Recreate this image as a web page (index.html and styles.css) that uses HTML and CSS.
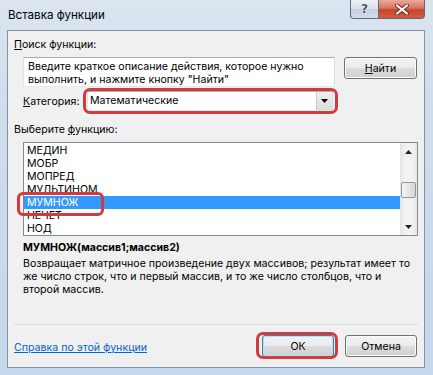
FILE: index.html
```html
<!DOCTYPE html>
<html>
<head>
    <title>Вставка функции</title>
    <link rel="stylesheet" href="styles.css">
</head>
<body>
    <div class="window">
        <div class="titlebar">
            <div class="title">Вставка функции</div>
            <div class="caption-btns">
                <div class="cap cap-help"><span class="help-glyph">?</span></div>
                <div class="cap cap-close">
                    <svg width="14" height="11" viewBox="0 0 14 11">
                        <path d="M2 1.5 L12 9.5 M12 1.5 L2 9.5" stroke="#6b2a20" stroke-width="4" stroke-linecap="round"/>
                        <path d="M2 1.5 L12 9.5 M12 1.5 L2 9.5" stroke="#ffffff" stroke-width="2.2" stroke-linecap="round"/>
                    </svg>
                </div>
            </div>
        </div>

        <div class="client">
            <div class="label"><u>П</u>оиск функции:</div>
            <div class="search-row">
                <div class="search-input">Введите краткое описание действия, которое нужно<br>выполнить, и нажмите кнопку "Найти"</div>
                <button class="btn btn-find"><u>Н</u>айти</button>
            </div>

            <div class="category-row">
                <div class="category-label"><u>К</u>атегория:</div>
                <div class="select mark mark-select">
                    <div class="select-value">Математические</div>
                    <div class="select-arrow">
                        <svg width="7" height="4" viewBox="0 0 7 4"><path d="M0 0 H7 L3.5 4 Z" fill="#000"/></svg>
                    </div>
                </div>
            </div>

            <div class="label label-list">Выберите <u>ф</u>ункцию:</div>
            <div class="listbox">
                <ul class="items">
                    <li>МЕДИН</li>
                    <li>МОБР</li>
                    <li>МОПРЕД</li>
                    <li>МУЛЬТИНОМ</li>
                    <li class="sel">МУМНОЖ</li>
                    <li>НЕЧЕТ</li>
                    <li>НОД</li>
                </ul>
                <div class="scrollbar">
                    <div class="sb-arrow">
                        <svg width="7" height="4" viewBox="0 0 7 4"><path d="M0 4 H7 L3.5 0 Z" fill="#222"/></svg>
                    </div>
                    <div class="sb-track"><div class="sb-thumb"></div></div>
                    <div class="sb-arrow">
                        <svg width="7" height="4" viewBox="0 0 7 4"><path d="M0 0 H7 L3.5 4 Z" fill="#222"/></svg>
                    </div>
                </div>
            </div>

            <div class="signature">МУМНОЖ(массив1;массив2)</div>
            <div class="desc">Возвращает матричное произведение двух массивов; результат имеет то<br>же число строк, что и первый массив, и то же число столбцов, что и<br>второй массив.</div>

            <div class="spacer"></div>
            <div class="separator"></div>

            <div class="footer">
                <a class="help-link" href="#">Справка по этой функции</a>
                <div class="footer-btns">
                    <button class="btn btn-default mark mark-ok">ОК</button>
                    <button class="btn">Отмена</button>
                </div>
            </div>
        </div>
    </div>
</body>
</html>
```

FILE: styles.css
```css
* {
    box-sizing: border-box;
}

body {
    margin: 0;
    width: 433px;
    height: 375px;
    overflow: hidden;
    font-family: Inter, "Open Sans", sans-serif;
    font-size: 10.6px;
    color: #000;
}

u {
    text-decoration: underline;
}

.window {
    height: 375px;
    display: flex;
    flex-direction: column;
    padding: 0 8px 7px 7px;
    background: linear-gradient(180deg, #dbe5f0 0%, #cfdcea 30%, #c6d8ec 100%);
}

/* title bar */
.titlebar {
    height: 30px;
    display: flex;
    justify-content: space-between;
    align-items: flex-start;
}

.title {
    padding: 8px 0 0 1px;
    font-size: 11.6px;
    line-height: 15px;
}

.caption-btns {
    display: flex;
}

.cap {
    height: 19px;
    border: 1px solid #5b6b7d;
    border-top: none;
    display: flex;
    align-items: center;
    justify-content: center;
}

.cap-help {
    width: 28px;
    border-right: none;
    border-radius: 0 0 0 4px;
    background: linear-gradient(180deg, #eef2f6 0%, #d9e1ea 48%, #c5d0dc 52%, #d3dde7 100%);
}

.help-glyph {
    font-family: "DejaVu Sans", sans-serif;
    font-weight: bold;
    font-size: 12px;
    line-height: 12px;
    color: #4c5563;
    text-shadow: 0 0 2px #fff, 0 0 1px #fff;
}

.cap-close {
    width: 47px;
    border-radius: 0 0 4px 0;
    background: linear-gradient(180deg, #eaa999 0%, #d9735d 45%, #c6432d 55%, #d65c42 100%);
}

/* client area */
.client {
    flex: 1;
    display: flex;
    flex-direction: column;
    background: #f0f0f0;
    border: 1px solid #7f93a8;
    padding: 6px 7px 0 6px;
}

.label {
    line-height: 15px;
}

.search-row {
    display: flex;
    align-items: flex-start;
    gap: 9px;
    margin: 5px 0 0 9px;
}

.search-input {
    width: 312px;
    height: 30px;
    background: #fff;
    border: 1px solid;
    border-color: #abadb3 #dbdfe6 #e3e9ef #e2e3ea;
    padding: 2px 4px;
    line-height: 13px;
    white-space: nowrap;
}

.btn {
    height: 22px;
    width: 72px;
    border: 1px solid #707070;
    border-radius: 3px;
    background: linear-gradient(180deg, #f2f2f2 0%, #ebebeb 50%, #dddddd 51%, #cfcfcf 100%);
    box-shadow: inset 0 0 0 1px #fbfbfb;
    font: inherit;
    color: #000;
    padding: 0;
}

.btn-find {
    width: 73px;
}

.btn-default {
    border-color: #3c7fb1;
    box-shadow: inset 0 0 0 1px #a7e5f8;
}

.category-row {
    display: flex;
    align-items: center;
    gap: 7px;
    margin: 4px 0 0 9px;
}

.category-label {
    width: 57px;
}

.select {
    width: 246px;
    height: 20px;
    display: flex;
    background: #fff;
    border: 1px solid;
    border-color: #abadb3 #dbdfe6 #e3e9ef #e2e3ea;
}

.select-value {
    flex: 1;
    padding-left: 2px;
    line-height: 18px;
}

.select-arrow {
    width: 16px;
    display: flex;
    align-items: center;
    justify-content: center;
    background: linear-gradient(180deg, #f0f0f0, #dcdcdc);
    border-left: 1px solid #c9c9c9;
}

/* red highlight marks */
.mark {
    position: relative;
}

.mark::after {
    content: "";
    position: absolute;
    border: 3px solid #d13b3b;
    border-radius: 7px;
    pointer-events: none;
}

.mark-select::after {
    top: -4px;
    left: -5px;
    right: -6px;
    bottom: -4px;
}

.mark-ok::after {
    top: -4px;
    left: -7px;
    right: -5px;
    bottom: -3px;
}

.label-list {
    margin-top: 11px;
}

/* function list */
.listbox {
    display: flex;
    height: 94px;
    margin: 5px -1px 0 9px;
    background: #fff;
    border: 1px solid #828790;
}

.items {
    flex: 1;
    list-style: none;
    margin: 0;
    padding: 1px 0 0;
}

.items li {
    height: 13px;
    line-height: 13px;
    padding-left: 3px;
}

.items li.sel {
    position: relative;
    background: #3399ff;
    color: #fff;
}

.items li.sel::after {
    content: "";
    position: absolute;
    top: -4px;
    left: -7px;
    width: 81px;
    height: 18px;
    border: 3px solid #d13b3b;
    border-radius: 6px;
}

.scrollbar {
    width: 17px;
    display: flex;
    flex-direction: column;
    background: linear-gradient(90deg, #e4e4e4 0%, #f2f2f2 30%, #f2f2f2 70%, #e8e8e8 100%);
}

.sb-arrow {
    height: 17px;
    display: flex;
    align-items: center;
    justify-content: center;
}

.sb-track {
    flex: 1;
}

.sb-thumb {
    height: 16px;
    margin: 22px 1px 0;
    border: 1px solid #979797;
    border-radius: 2px;
    background: linear-gradient(90deg, #f3f3f3 0%, #e6e6e6 50%, #d6d6d6 100%);
}

.signature {
    margin: 4px 0 0 9px;
    font-weight: bold;
    line-height: 15px;
}

.desc {
    margin: 2px 0 0 9px;
    line-height: 13px;
    white-space: nowrap;
}

.spacer {
    flex: 1;
}

.separator {
    height: 1px;
    margin-right: -1px;
    background: #dcdcdc;
}

.footer {
    height: 42px;
    display: flex;
    align-items: center;
    justify-content: space-between;
}

.help-link {
    color: #0066cc;
    text-decoration: underline;
    margin-top: 2px;
}

.footer-btns {
    display: flex;
    gap: 11px;
}
```
